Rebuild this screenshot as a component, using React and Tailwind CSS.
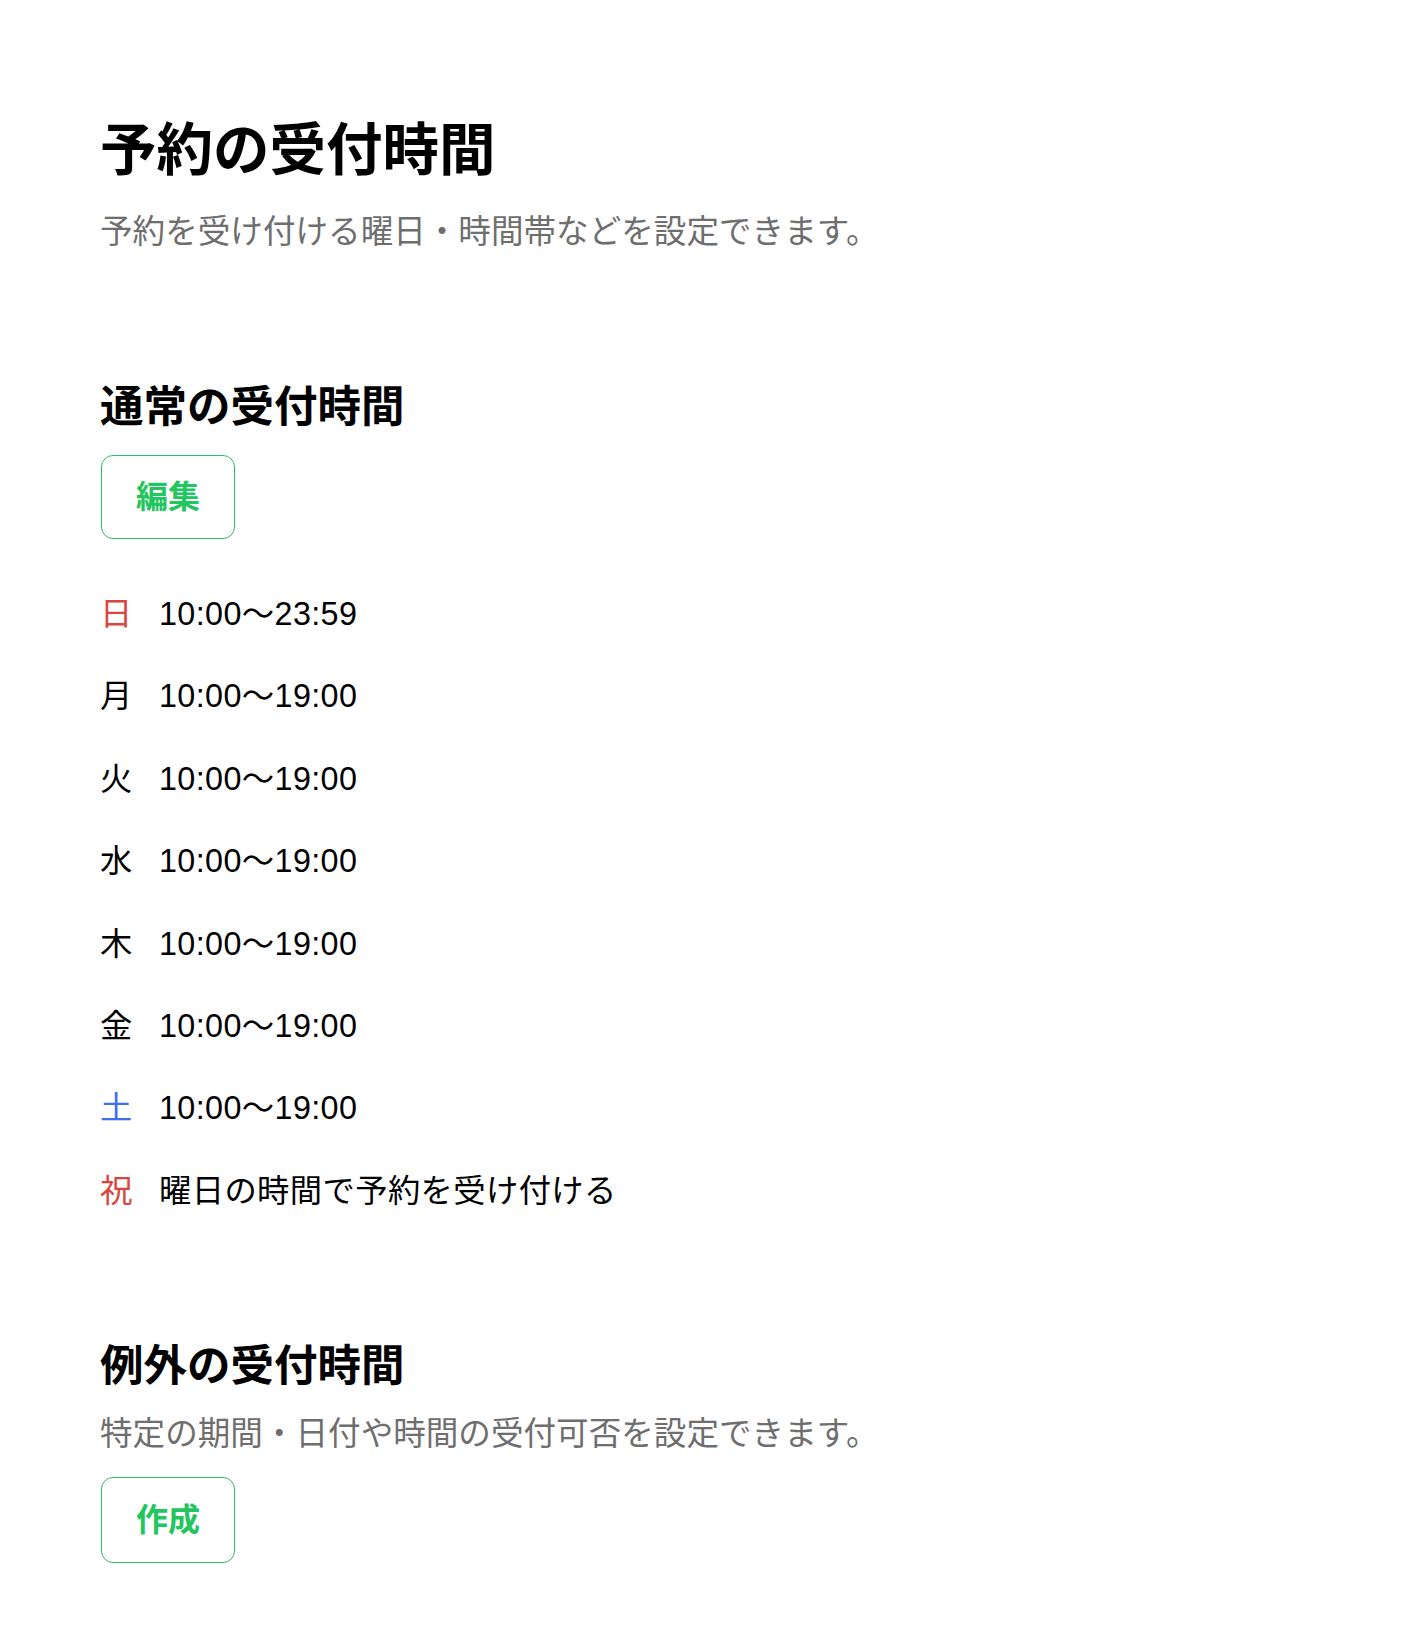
import React from "react";

const FONT = { fontFamily: '"Liberation Sans", "Noto Sans CJK JP", sans-serif' };

const rows = [
  { d: "日", t: "10:00〜23:59", c: "text-[#d9463e]" },
  { d: "月", t: "10:00〜19:00", c: "text-black" },
  { d: "火", t: "10:00〜19:00", c: "text-black" },
  { d: "水", t: "10:00〜19:00", c: "text-black" },
  { d: "木", t: "10:00〜19:00", c: "text-black" },
  { d: "金", t: "10:00〜19:00", c: "text-black" },
  { d: "土", t: "10:00〜19:00", c: "text-[#3f6ef0]" },
  { d: "祝", t: "曜日の時間で予約を受け付ける", c: "text-[#d9463e]" },
];

export default function App() {
  return (
    <div className="min-h-screen bg-white" style={FONT}>
      <div className="pl-[100px] pr-[100px] pt-[123px] pb-[70px] flex flex-col items-start text-black">
        <h1 className="text-[56.5px] leading-[56px] font-bold tracking-normal">予約の受付時間</h1>
        <p className="mt-[37px] text-[32.6px] leading-[32px] text-[#6e6e6e]">
          予約を受け付ける曜日・時間帯などを設定できます。
        </p>

        <h2 className="mt-[138px] text-[43.5px] leading-[43px] font-bold">通常の受付時間</h2>
        <button className="mt-[26px] ml-[1px] w-[134px] h-[84px] rounded-[12px] border-[1.75px] border-[#22c55e] bg-white text-[#22c55e] text-[32px] font-bold flex items-center justify-center">
          編集
        </button>

        <div className="mt-[51px] flex flex-col gap-[34.4px]">
          {rows.map((r) => (
            <div key={r.d} className="flex items-center h-[48px] text-[32.3px] leading-[48px]">
              <span className={`w-[59px] ${r.c}`}>{r.d}</span>
              <span className="text-black tracking-[0.4px]">{r.t}</span>
            </div>
          ))}
        </div>

        <h2 className="mt-[130px] text-[43.5px] leading-[43px] font-bold">例外の受付時間</h2>
        <p className="mt-[30px] text-[32.6px] leading-[32px] text-[#6e6e6e]">
          特定の期間・日付や時間の受付可否を設定できます。
        </p>
        <button className="mt-[27px] ml-[1px] w-[134px] h-[86px] rounded-[12px] border-[1.75px] border-[#22c55e] bg-white text-[#22c55e] text-[32px] font-bold flex items-center justify-center">
          作成
        </button>
      </div>
    </div>
  );
}
